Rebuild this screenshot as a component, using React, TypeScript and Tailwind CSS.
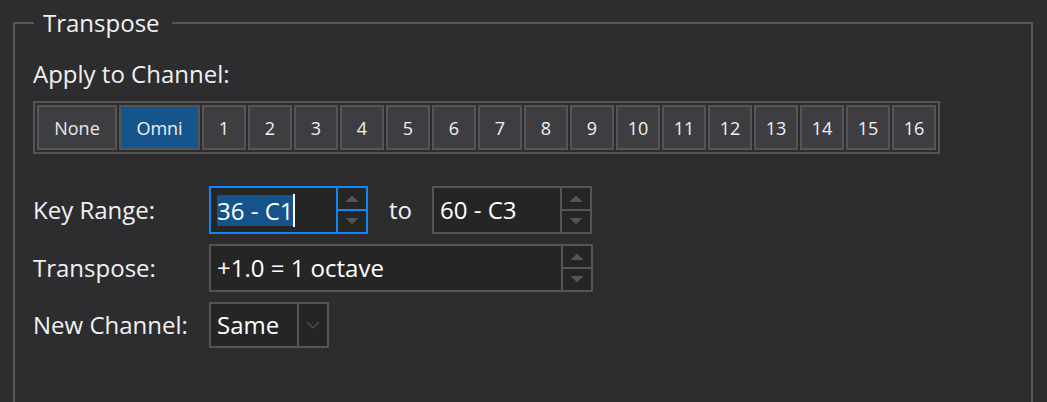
import React from 'react';

const channels = ['1', '2', '3', '4', '5', '6', '7', '8', '9', '10', '11', '12', '13', '14', '15', '16'];

const UpArrow = () => (
  <svg width="14" height="7" viewBox="0 0 14 7">
    <path d="M7 0.5 L13.5 7 L0.5 7 Z" fill="#555555" />
  </svg>
);

const DownArrow = () => (
  <svg width="14" height="7" viewBox="0 0 14 7">
    <path d="M0.5 0 L13.5 0 L7 6.5 Z" fill="#555555" />
  </svg>
);

const Spinner = ({ focused = false }: { focused?: boolean }) => (
  <div
    className={`flex w-[30px] flex-col border-l-2 ${focused ? 'border-[#1185f2]' : 'border-[#555555]'}`}
  >
    <div
      className={`flex flex-1 items-center justify-center border-b-2 ${focused ? 'border-[#1185f2]' : 'border-[#555555]'}`}
    >
      <UpArrow />
    </div>
    <div className="flex flex-1 items-center justify-center">
      <DownArrow />
    </div>
  </div>
);

export default function App() {
  return (
    <div className="h-[402px] w-[1047px] overflow-hidden bg-[#2d2d30] pl-[13px] font-['Open_Sans','Noto_Sans',sans-serif] text-[#f1f1f1]">
      <fieldset className="mt-[11px] h-[440px] w-[1020px] border-2 border-[#565656] p-0">
        <legend className="ml-[19px] pl-[9px] pr-[12px] text-[24px] leading-[24px]">Transpose</legend>

        <div className="pl-[18px] pt-[23px]">
          {/* Channel selector */}
          <div className="text-[24px] leading-[32px]">Apply to Channel:</div>

          <div className="mt-[11px] inline-flex gap-[2px] border-2 border-[#555555] p-[2px]">
            <button className="h-[45px] w-[80px] border-2 border-[#555555] bg-[#3e3e42] pt-[1px] text-[18px] text-[#e8e8e8]">
              None
            </button>
            <button className="h-[45px] w-[81px] border-2 border-[#555555] bg-[#16548c] pt-[1px] text-[18px] text-[#f1f1f1]">
              Omni
            </button>
            {channels.map((ch) => (
              <button
                key={ch}
                className="h-[45px] w-[44px] border-2 border-[#555555] bg-[#3e3e42] pt-[1px] text-[18px] text-[#f1f1f1]"
              >
                {ch}
              </button>
            ))}
          </div>

          {/* Key range, transpose, new channel */}
          <div className="mt-[32px] flex flex-col gap-[10px] text-[24px]">
            <div className="flex items-center">
              <span className="w-[176px]">Key Range:</span>
              <div className="flex h-[48px] w-[159px] border-2 border-[#1185f2] bg-[#252526]">
                <div className="flex flex-1 items-center pl-[6px]">
                  <span className="inline-block h-[31px] bg-[#15538a] leading-[31px] text-white">36 - C1</span>
                  <span className="h-[33px] w-[2px] bg-white" />
                </div>
                <Spinner focused />
              </div>
              <span className="ml-[21px] mr-[20px]">to</span>
              <div className="flex h-[48px] w-[160px] border-2 border-[#555555] bg-[#252526]">
                <div className="flex flex-1 items-center pl-[6px] text-white">60 - C3</div>
                <Spinner />
              </div>
            </div>

            <div className="flex items-center">
              <span className="w-[176px]">Transpose:</span>
              <div className="flex h-[48px] w-[384px] border-2 border-[#555555] bg-[#252526]">
                <div className="flex flex-1 items-center pl-[6px] text-white">+1.0 = 1 octave</div>
                <Spinner />
              </div>
            </div>

            <div className="flex items-center">
              <span className="w-[176px]">New Channel:</span>
              <div className="flex h-[46px] w-[120px] border-2 border-[#555555] bg-[#252526]">
                <div className="flex flex-1 items-center pl-[6px] text-white">Same</div>
                <div className="flex w-[30px] items-center justify-center border-l-2 border-[#555555]">
                  <svg width="14" height="8" viewBox="0 0 14 8">
                    <path d="M1 1 L7 7 L13 1" fill="none" stroke="#555555" strokeWidth="1.2" />
                  </svg>
                </div>
              </div>
            </div>
          </div>
        </div>
      </fieldset>
    </div>
  );
}
